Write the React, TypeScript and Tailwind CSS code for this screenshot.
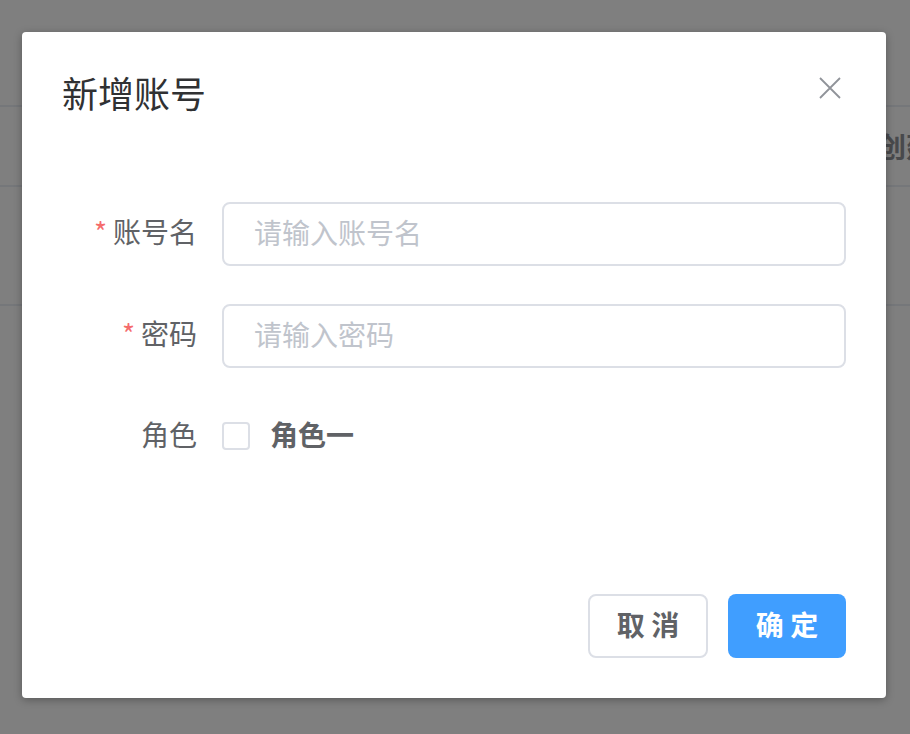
const FONT = { fontFamily: '"Noto Sans CJK SC", "Noto Sans", sans-serif' };

function CloseIcon() {
  return (
    <svg width="22" height="22" viewBox="0 0 22 22" fill="none" stroke="currentColor" strokeWidth="1.8">
      <path d="M1 1L21 21M21 1L1 21" />
    </svg>
  );
}

function FormRow({ label, required, placeholder }: { label: string; required?: boolean; placeholder: string }) {
  return (
    <div className="flex items-center h-[64px] mb-[38px]">
      <label className="w-[160px] pr-[25px] pb-[6px] text-right text-[28px] text-[#606266] leading-none">
        {required && <span className="text-[#f56c6c] mr-[6px]">*</span>}
        {label}
      </label>
      <input
        className="flex-1 h-[64px] border-2 border-[#dcdfe6] rounded-[8px] pl-[30px] pb-[4px] text-[28px] text-[#606266] placeholder:text-[#c0c4cc] outline-none"
        placeholder={placeholder}
        style={FONT}
      />
    </div>
  );
}

export default function App() {
  return (
    <div className="relative w-full h-[734px] bg-white overflow-hidden" style={FONT}>
      {/* ── page behind the mask ─────────────────────── */}
      <div className="h-[107px] border-b-2 border-[#ebeef5]" />
      <div className="h-[80px] border-b-2 border-[#ebeef5] flex items-center pl-[878px]">
        <span className="text-[28px] font-bold text-[#909399] whitespace-nowrap">创建</span>
      </div>
      <div className="h-[119px] border-b-2 border-[#ebeef5]" />

      {/* ── mask + dialog ────────────────────────────── */}
      <div className="absolute inset-0 bg-black/50">
        <div className="relative ml-[22px] mt-[32px] w-[864px] h-[666px] bg-white rounded-[4px] shadow-[0_2px_8px_rgba(0,0,0,0.3)] flex flex-col">
          <div className="pt-[36px] pb-[24px] px-[40px]">
            <h2 className="text-[36px] leading-[48px] text-[#303133]">新增账号</h2>
          </div>
          <button className="absolute top-[45px] right-[45px] text-[#909399]">
            <CloseIcon />
          </button>

          <div className="pt-[62px] px-[40px]">
            <FormRow label="账号名" required placeholder="请输入账号名" />
            <FormRow label="密码" required placeholder="请输入密码" />
            <div className="flex items-center h-[64px]">
              <label className="w-[160px] pr-[25px] pb-[8px] text-right text-[28px] text-[#606266] leading-none">角色</label>
              <span className="w-[28px] h-[28px] -mt-[4px] border-2 border-[#dcdfe6] rounded-[4px] bg-white" />
              <span className="ml-[20px] pb-[8px] text-[28px] font-semibold text-[#606266] leading-none">角色一</span>
            </div>
          </div>

          <div className="mt-auto px-[40px] pb-[40px] flex justify-end gap-[20px]">
            <button className="w-[120px] h-[64px] pb-[4px] border-2 border-[#dcdfe6] rounded-[8px] bg-white text-[28px] font-semibold text-[#606266]">
              取 消
            </button>
            <button className="w-[118px] h-[64px] pb-[4px] rounded-[8px] bg-[#409eff] text-[28px] font-semibold text-white">
              确 定
            </button>
          </div>
        </div>
      </div>
    </div>
  );
}
